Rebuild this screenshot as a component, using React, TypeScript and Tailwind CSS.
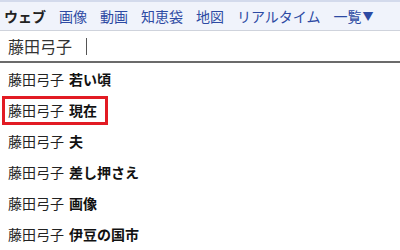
import React from 'react'

const tabs = ['画像', '動画', '知恵袋', '地図', 'リアルタイム']

const suggestions = ['若い頃', '現在', '夫', '差し押さえ', '画像', '伊豆の国市']

const font = { fontFamily: '"Noto Sans CJK JP", "Noto Sans", sans-serif' }

export default function App() {
  return (
    <div className="w-[400px] h-[250px] bg-white overflow-hidden" style={font}>
      <div className="h-[31px] bg-[#f0f3fb] border-t-2 border-[#d3daec] border-b border-b-[#cfd3dc] flex items-center gap-[13px] pl-[4px] text-[14px] leading-none">
        <span className="font-bold text-[#222]">ウェブ</span>
        {tabs.map((t) => (
          <span key={t} className="text-[#2d4aa3]">{t}</span>
        ))}
        <span className="text-[#2d4aa3] flex items-center">
          一覧<span className="text-[11px] ml-[1px]">▼</span>
        </span>
      </div>
      <div className="h-[32px] border-b-2 border-[#6b6b6b] flex items-center pl-[8px]">
        <span className="text-[16px] text-[#333] leading-none">藤田弓子</span>
        <span className="w-px h-[17px] bg-[#555] ml-[14px]" />
      </div>
      <ul>
        {suggestions.map((s, i) => (
          <li key={s} className="relative h-[31px] flex items-center pl-[8px] text-[14px] text-[#222] leading-none">
            <span>藤田弓子</span>
            <span className="font-bold ml-[5px] text-[#111]">{s}</span>
            {i === 1 && (
              <div className="absolute left-[2px] top-[2px] w-[106px] h-[29px] border-[3px] border-[#e21b23]" />
            )}
          </li>
        ))}
      </ul>
    </div>
  )
}
